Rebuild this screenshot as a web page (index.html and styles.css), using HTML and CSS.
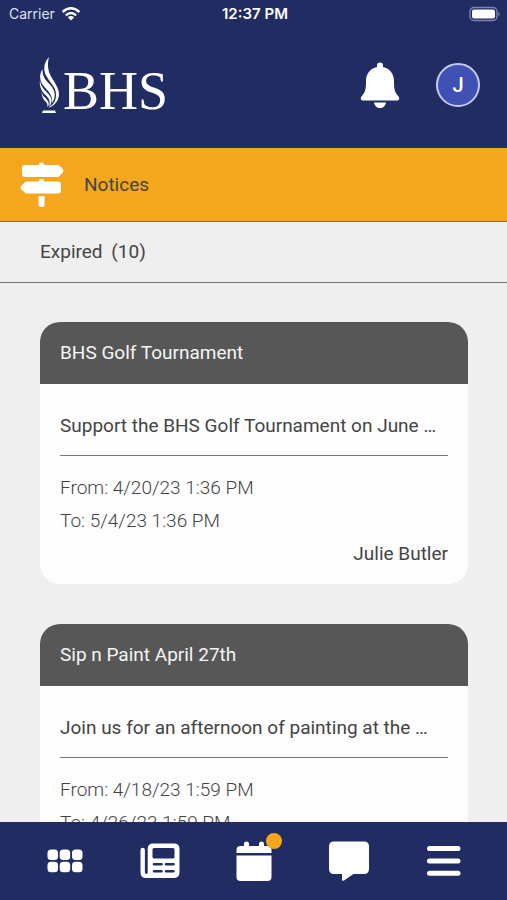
FILE: index.html
```html
<!DOCTYPE html>
<html lang="en">
<head>
<meta charset="utf-8">
<meta name="viewport" content="width=device-width, initial-scale=1">
<title>BHS Notices</title>
<link rel="stylesheet" href="styles.css">
</head>
<body>
<div class="status">
  <div class="carrier">
    <span>Carrier</span>
    <svg width="20" height="14" viewBox="0 0 20 14" fill="none" stroke="#fff" stroke-width="2.4" aria-hidden="true">
      <path d="M1.600 5Q10-2.400 18.400 5"/><path d="M4.800 8.400Q10 3.800 15.200 8.400"/><path d="M10 13.600L6.800 10.300Q10 7.600 13.200 10.300Z" fill="#fff" stroke="none"/>
    </svg>
  </div>
  <time class="clock">12:37 PM</time>
  <svg class="battery" width="32" height="16" viewBox="0 0 32 16" aria-hidden="true">
    <rect x="1" y="1.500" width="27" height="13" rx="4" fill="none" stroke="#7f84ab" stroke-width="1.400"/>
    <rect x="3" y="3.500" width="23" height="9" rx="2" fill="#fff"/>
    <path d="M29.500 5.500Q32 8 29.500 10.500Z" fill="#7f84ab"/>
  </svg>
</div>

<header class="header">
  <div class="logo">
    <svg width="22" height="58" viewBox="0 0 22 58" fill="#fff" aria-hidden="true">
      <path d="M10 1C4 8 4 15 8 21C12 28 17 31 17 39C17 45 14 49 9 52C18 49 22 41 19 33C16 25 11 21 9.500 14C8.500 9 9 5 10 1Z"/>
      <path d="M6.500 8C4 13 5 18 7.500 22C11 28 16 31 16.500 37C13 30 7 26 5 20C4 16 4.500 12 6.500 8Z" fill="#212c63"/>
      <path d="M3.500 13C-0.500 20 1 26 5.500 31C10 36 14 40 13 47C18 40 15.500 33 10.500 28C6 24 3 19 3.500 13Z"/>
      <path d="M1 24C0 31 3 36 7 39.500C10.500 43 11.500 46 10 51C14.500 46 12.500 41 8.500 37C4.500 33 1.500 30 1 24Z"/>
      <path d="M2.500 36C3 42 5 44 7 46Q9 48 8.500 51C11 48 9.500 45 6.500 42Q3.500 40 2.500 36Z"/>
      <path d="M4 54.500H16L17 57H3Z"/>
    </svg>
    <span class="logo-text">BHS</span>
  </div>
  <button class="bell" type="button" aria-label="Notifications">
    <svg width="40" height="46" viewBox="0 0 40 46" fill="#fff" aria-hidden="true">
      <path d="M17 5V3.500a3 3 0 0 1 6 0V5C30 6.500 34 12 34 19C34 27 34.500 30 38.500 34.500C40 36.500 39 38.500 37 38.500H3C1 38.500 0 36.500 1.500 34.500C5.500 30 6 27 6 19C6 12 10 6.500 17 5Z"/>
      <path d="M14 40.500H26C25.500 44 23 46 20 46S14.500 44 14 40.500Z"/>
    </svg>
  </button>
  <button class="avatar" type="button" aria-label="Account J">J</button>
</header>

<div class="notices">
  <svg width="44" height="46" viewBox="0 0 44 46" fill="#fff" aria-hidden="true">
    <path d="M19 3a2.500 2.500 0 0 1 5 0H38.500L42 6Q44.500 9 42 11.500L38.500 15H5Q2 15 2 12V6Q2 3 5 3Z"/>
    <path d="M19 19.500V18.500Q19 17 21.500 17T24 18.500V19.500H38Q41 19.500 41 22.500V28.500Q41 31.500 38 31.500H6L2 28Q-1 25.500 2 23L6 19.500Z"/>
    <path d="M18.500 34H24.500V42.500Q24.500 45 21.500 45T18.500 42.500Z"/>
  </svg>
  <h1 class="title">Notices</h1>
</div>
<h2 class="expired">Expired <span>(10)</span></h2>

<main class="list">
  <article class="card">
    <h3 class="card-title">BHS Golf Tournament</h3>
    <div class="card-body">
      <p class="summary">Support the BHS Golf Tournament on June …</p>
      <p class="date">From: 4/20/23 1:36 PM</p>
      <p class="date">To: 5/4/23 1:36 PM</p>
      <p class="author">Julie Butler</p>
    </div>
  </article>
  <article class="card">
    <h3 class="card-title">Sip n Paint April 27th</h3>
    <div class="card-body">
      <p class="summary">Join us for an afternoon of painting at the …</p>
      <p class="date">From: 4/18/23 1:59 PM</p>
      <p class="date">To: 4/26/23 1:59 PM</p>
    </div>
  </article>
</main>

<nav class="nav" aria-label="Main">
  <a href="#apps" aria-label="Apps">
    <svg width="36" height="24" viewBox="0 0 36 24" fill="#fff" aria-hidden="true">
      <rect x="0.500" y="0.500" width="10.500" height="10.500" rx="3.500"/><rect x="12.700" y="0.500" width="10.500" height="10.500" rx="3.500"/><rect x="25" y="0.500" width="10.500" height="10.500" rx="3.500"/>
      <rect x="0.500" y="12.800" width="10.500" height="10.500" rx="3.500"/><rect x="12.700" y="12.800" width="10.500" height="10.500" rx="3.500"/><rect x="25" y="12.800" width="10.500" height="10.500" rx="3.500"/>
    </svg>
  </a>
  <a href="#news" aria-label="News">
    <svg width="40" height="36" viewBox="0 0 40 36" aria-hidden="true">
      <path d="M13 0.500H34Q39.500 0.500 39.500 6V29Q39.500 35 33.500 35H6Q0.500 35 0.500 29V7a2.200 2.200 0 0 1 4.400 0V29.500a1.400 1.400 0 0 0 2.800 0V6Q7.700 0.500 13 0.500Z" fill="#fff"/>
      <rect x="12.500" y="5" width="22" height="10.500" rx="1.500" fill="#212c63"/>
      <path d="M14 21.200H21.500M26 21.200H33.500M14 28.200H21.500M26 28.200H33.500" stroke="#212c63" stroke-width="2.600" stroke-linecap="round"/>
    </svg>
  </a>
  <a href="#calendar" aria-label="Calendar">
    <span class="calendar">
      <svg width="36" height="40" viewBox="0 0 36 40" fill="#fff" aria-hidden="true">
        <path d="M0.500 12V9Q0.500 5 4.500 5H8V3a2.500 2.500 0 0 1 5 0V5H23V3a2.500 2.500 0 0 1 5 0V5H31.500Q35.500 5 35.500 9V12Z"/>
        <path d="M0.500 14.500H35.500V36Q35.500 40 31.500 40H4.500Q0.500 40 0.500 36Z"/>
      </svg>
      <span class="dot"></span>
    </span>
  </a>
  <a href="#messages" aria-label="Messages">
    <svg width="40" height="40" viewBox="0 0 40 40" fill="#fff" aria-hidden="true"><path d="M5 0.500H35Q40 0.500 40 5.500V28Q40 33 35 33H24.500L15 39.500Q13 40.500 13 38.500V33H5Q0 33 0 28V5.500Q0 0.500 5 0.500Z"/></svg>
  </a>
  <a href="#menu" aria-label="Menu">
    <svg width="36" height="30" viewBox="0 0 36 30" stroke="#fff" stroke-width="5" stroke-linecap="round" aria-hidden="true"><path d="M3.500 2.500H32M3.500 15H32M3.500 27.300H32"/></svg>
  </a>
</nav>
</body>
</html>
```
FILE: styles.css
```css
* { box-sizing: border-box; }

body {
  margin: 0;
  height: 100vh;
  display: flex;
  flex-direction: column;
  overflow: hidden;
  background: #efefef;
  color: #444;
  font-family: Roboto, sans-serif;
  font-size: 19px;
  line-height: 24px;
}

h1, h2, h3, p { margin: 0; font-size: 19px; font-weight: 400; }
svg { display: block; flex: none; }

button {
  padding: 0;
  border: 0;
  background: none;
  color: inherit;
  font: inherit;
}

.status {
  display: grid;
  grid-template-columns: 1fr auto 1fr;
  align-items: center;
  height: 28px;
  padding: 0 6px 0 9px;
  background: #212c63;
  color: #fff;
  font-family: Inter, sans-serif;
  font-size: 14px;
}
.carrier { display: flex; align-items: center; gap: 6px; color: #dfe1ee; }
.clock { font-size: 15px; font-weight: 600; }
.battery { justify-self: end; }

.header {
  display: flex;
  align-items: center;
  flex: none;
  height: 120px;
  padding: 0 27px 6px 39px;
  background: #212c63;
  color: #fff;
}
.logo { display: flex; align-items: flex-end; margin-right: auto; gap: 2px; }
.logo-text {
  font-family: "Liberation Serif", serif;
  font-size: 54px;
  line-height: 46px;
}
.bell { margin-right: 36px; }
.avatar {
  width: 44px;
  height: 44px;
  border: 2px solid #c5cae9;
  border-radius: 50%;
  background: #3f51b5;
  font-size: 20px;
  font-weight: 500;
}

.notices {
  display: flex;
  align-items: center;
  flex: none;
  gap: 20px;
  height: 74px;
  padding: 0 20px;
  border-bottom: 1px solid #8a7340;
  background: #f4a71d;
}

.expired {
  flex: none;
  padding: 18px 40px;
  border-bottom: 1px solid #777;
}
.expired span { margin-left: 4px; }

.list {
  flex: 1;
  min-height: 0;
  padding: 39px 39px 0 40px;
  overflow: hidden;
}

.card {
  margin-bottom: 40px;
  border-radius: 20px;
  overflow: hidden;
  background: #fdfdfd;
}
.card-title {
  padding: 19px 20px;
  background: #575757;
  color: #f5f5f5;
}
.card-body { padding: 21px 20px 14px; }
.card-body p { line-height: 33px; }
.card-body .summary {
  margin-bottom: 15px;
  padding: 4px 0 13px;
  border-bottom: 1px solid #777;
  overflow: hidden;
  white-space: nowrap;
  text-overflow: ellipsis;
}
.date { font-weight: 300; }
.author { text-align: right; }

.nav {
  display: flex;
  align-items: center;
  flex: none;
  height: 78px;
  padding: 0 16px 0 18px;
  background: #212c63;
}
.nav a { display: flex; flex: 1; justify-content: center; }
.calendar { position: relative; }
.dot {
  position: absolute;
  top: -8px;
  right: -10px;
  width: 16px;
  height: 16px;
  border-radius: 50%;
  background: #f4a71d;
}
```
